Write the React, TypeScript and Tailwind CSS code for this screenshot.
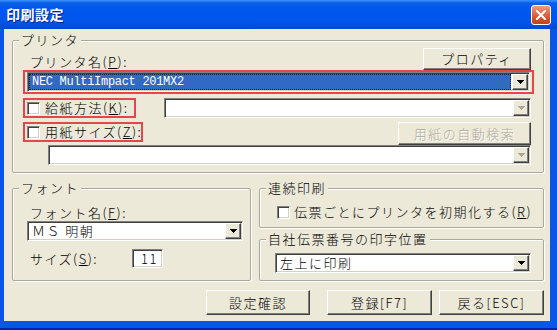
import type { ReactNode } from 'react'

const jp = "font-['Noto_Sans_CJK_JP',sans-serif]"

// classic 3D borders
const sunken =
  'border border-t-[#808080] border-l-[#808080] border-b-white border-r-white shadow-[inset_1px_1px_0_#404040,inset_-1px_-1px_0_#d4d0c8]'
const raised =
  'border border-t-white border-l-white border-b-[#404040] border-r-[#404040] shadow-[inset_-1px_-1px_0_#808080]'
const group =
  'border border-[#aca899] shadow-[inset_1px_1px_0_#fff,1px_1px_0_#fff] rounded-[2px]'
const redBox = 'border-2 border-[#e4464c]'

function Arrow({ disabled }: { disabled?: boolean }) {
  return (
    <div className={`flex w-[16px] shrink-0 items-center justify-center bg-[#ece9d8] ${raised}`}>
      <svg width="7" height="4" viewBox="0 0 7 4" shapeRendering="crispEdges">
        <polygon points="0,0 7,0 3.5,4" fill={disabled ? '#aca899' : '#000'} />
      </svg>
    </div>
  )
}

function Combo({
  children,
  className = '',
  disabled,
  selected,
}: {
  children?: ReactNode
  className?: string
  disabled?: boolean
  selected?: boolean
}) {
  return (
    <div className={`flex h-[20px] bg-white p-[1px] ${sunken} ${className}`}>
      {selected ? (
        <div className="mr-[1px] flex flex-1 items-center border border-dotted border-[#202020] bg-[#316ac5] pl-[2px] font-['Liberation_Mono',monospace] text-[12px] tracking-[-0.3px] text-white">
          {children}
        </div>
      ) : (
        <div className="flex flex-1 items-center pl-[3px] whitespace-nowrap">{children}</div>
      )}
      <Arrow disabled={disabled} />
    </div>
  )
}

function Check() {
  return <div className={`h-[13px] w-[13px] shrink-0 bg-white ${sunken}`} />
}

function Button({
  children,
  className = '',
  disabled,
}: {
  children: ReactNode
  className?: string
  disabled?: boolean
}) {
  return (
    <div
      className={`flex items-center justify-center bg-[#ece9d8] ${raised} ${
        disabled ? 'text-[#aca899] [text-shadow:1px_1px_0_#fff]' : ''
      } ${className}`}
    >
      {children}
    </div>
  )
}

function Legend({ children }: { children: ReactNode }) {
  return <legend className="ml-[6px] bg-[#ece9d8] px-[2px] leading-[14px]">{children}</legend>
}

export default function App() {
  return (
    <div className={`flex h-[330px] w-[557px] flex-col bg-[#0856e8] shadow-[inset_0_-2px_0_#0022b0] ${jp}`}>
      {/* タイトルバー */}
      <div className="flex h-[29px] shrink-0 items-center justify-between px-[6px] bg-[linear-gradient(to_bottom,#3d95ff_0px,#0a5fe8_3px,#0058ee_8px,#0055ea_22px,#0046d4_29px)]">
        <span className="text-[14px] font-bold tracking-[0.5px] text-white [text-shadow:1px_1px_0_#0a1e8c]">
          印刷設定
        </span>
        <div className="flex h-[20px] w-[20px] items-center justify-center rounded-[3px] border border-white bg-[linear-gradient(to_bottom,#ef9a7c,#d9582f_60%,#c44020)]">
          <svg width="10" height="10" viewBox="0 0 10 10">
            <path d="M1 1L9 9M9 1L1 9" stroke="#fff" strokeWidth="2" strokeLinecap="square" />
          </svg>
        </div>
      </div>

      {/* 本体 */}
      <div className="mb-[9px] ml-[4px] mr-[7px] flex flex-1 flex-col bg-[#ece9d8] pl-[8px] pt-[4px] text-[13px] leading-[16px] font-light tracking-[1.5px] text-black">
        {/* プリンタ */}
        <fieldset className={`w-[532px] pb-[7px] ${group}`}>
          <Legend>プリンタ</Legend>

          <div className="flex h-[23px] items-end justify-between pl-[17px] pr-[12px]">
            <span>
              プリンタ名(<u>P</u>):
            </span>
            <Button className="h-[22px] w-[108px]">プロパティ</Button>
          </div>

          <div className={`ml-[10px] mr-[9px] px-[2px] ${redBox}`}>
            <Combo selected>NEC MultiImpact 201MX2</Combo>
          </div>

          <div className="mt-[4px] flex items-center justify-between pr-[12px]">
            <div className={`ml-[10px] flex h-[20px] w-[113px] items-center pl-[2px] ${redBox}`}>
              <Check />
              <span className="ml-[5px] whitespace-nowrap">
                給紙方法(<u>K</u>):
              </span>
            </div>
            <Combo disabled className="w-[367px]" />
          </div>

          <div className="mt-[4px] flex h-[23px] items-start justify-between pr-[12px]">
            <div className={`ml-[10px] flex h-[20px] w-[120px] items-center pl-[2px] ${redBox}`}>
              <Check />
              <span className="ml-[5px] whitespace-nowrap">
                用紙サイズ(<u>Z</u>):
              </span>
            </div>
            <Button disabled className="h-[23px] w-[133px]">
              用紙の自動検索
            </Button>
          </div>

          <div className="flex pr-[12px] pl-[35px]">
            <Combo disabled className="flex-1" />
          </div>
        </fieldset>

        <div className="mt-[8px] flex w-[532px] gap-[8px]">
          {/* フォント */}
          <fieldset className={`w-[239px] pb-[12px] ${group}`}>
            <Legend>フォント</Legend>
            <div className="mt-[10px] pl-[17px]">
              フォント名(<u>F</u>):
            </div>
            <div className="ml-[14px] mr-[7px] flex">
              <Combo className="flex-1">ＭＳ 明朝</Combo>
            </div>
            <div className="mt-[8px] flex h-[19px] items-center pl-[17px]">
              <span className="w-[102px]">
                サイズ(<u>S</u>):
              </span>
              <div className={`flex h-[19px] w-[31px] items-center justify-end bg-white pr-[4px] ${sunken}`}>11</div>
            </div>
          </fieldset>

          <div className="flex w-[285px] flex-col">
            <fieldset className={`pb-[7px] ${group}`}>
              <Legend>連続印刷</Legend>
              <div className="mt-[9px] flex h-[16px] items-center pl-[17px]">
                <Check />
                <span className="ml-[4px] whitespace-nowrap">
                  伝票ごとにプリンタを初期化する(<u>R</u>)
                </span>
              </div>
            </fieldset>

            <fieldset className={`mt-[4px] pb-[7px] ${group}`}>
              <Legend>自社伝票番号の印字位置</Legend>
              <div className="ml-[15px] mr-[12px] mt-[7px] flex">
                <Combo className="flex-1">左上に印刷</Combo>
              </div>
            </fieldset>
          </div>
        </div>

        {/* ボタン */}
        <div className="mt-[9px] flex w-[532px] justify-end">
          <Button className="h-[25px] w-[104px]">設定確認</Button>
          <Button className="ml-[17px] h-[25px] w-[105px]">登録[F7]</Button>
          <Button className="ml-[7px] h-[25px] w-[105px]">戻る[ESC]</Button>
        </div>
      </div>
    </div>
  )
}
